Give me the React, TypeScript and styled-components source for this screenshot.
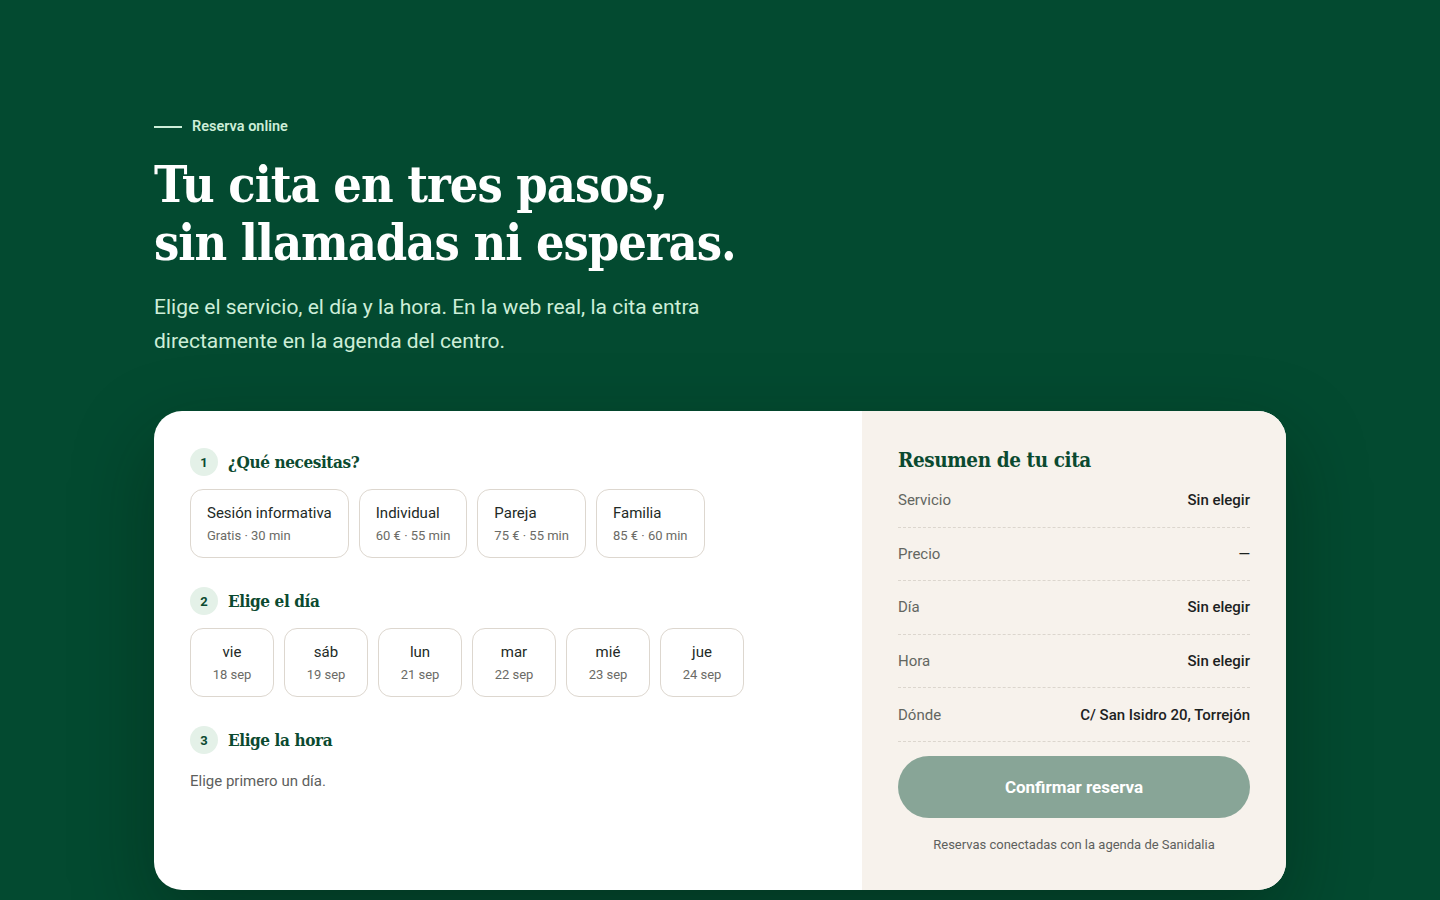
import React, { FC } from "react";
import styled, { createGlobalStyle } from "styled-components";

const GlobalStyle = createGlobalStyle`
  html, body {
    margin: 0;
    padding: 0;
    background: #034a30;
  }
  body {
    font-family: Roboto, "Liberation Sans", Arial, sans-serif;
  }
  * {
    box-sizing: border-box;
  }
`;

const services = [
  { name: "Sesión informativa", meta: "Gratis · 30 min" },
  { name: "Individual", meta: "60 € · 55 min" },
  { name: "Pareja", meta: "75 € · 55 min" },
  { name: "Familia", meta: "85 € · 60 min" },
];

const days = [
  { day: "vie", date: "18 sep" },
  { day: "sáb", date: "19 sep" },
  { day: "lun", date: "21 sep" },
  { day: "mar", date: "22 sep" },
  { day: "mié", date: "23 sep" },
  { day: "jue", date: "24 sep" },
];

const summary = [
  { label: "Servicio", value: "Sin elegir" },
  { label: "Precio", value: "—" },
  { label: "Día", value: "Sin elegir" },
  { label: "Hora", value: "Sin elegir" },
  { label: "Dónde", value: "C/ San Isidro 20, Torrejón" },
];

const App: FC = (): JSX.Element => {
  return (
    <Page>
      <GlobalStyle />
      <Hero>
        <Eyebrow>
          <EyebrowLine />
          Reserva online
        </Eyebrow>
        <Title>
          Tu cita en tres pasos,
          <br />
          sin llamadas ni esperas.
        </Title>
        <Lead>
          Elige el servicio, el día y la hora. En la web real, la cita entra
          directamente en la agenda del centro.
        </Lead>
      </Hero>

      <Card>
        <Steps>
          <Step>
            <StepHead>
              <StepNum>1</StepNum>
              <StepTitle>¿Qué necesitas?</StepTitle>
            </StepHead>
            <OptionRow>
              {services.map((s) => (
                <Option key={s.name} type="button">
                  <OptionMain>{s.name}</OptionMain>
                  <OptionSub>{s.meta}</OptionSub>
                </Option>
              ))}
            </OptionRow>
          </Step>

          <Step>
            <StepHead>
              <StepNum>2</StepNum>
              <StepTitle>Elige el día</StepTitle>
            </StepHead>
            <OptionRow>
              {days.map((d) => (
                <DayOption key={d.date} type="button">
                  <OptionMain>{d.day}</OptionMain>
                  <OptionSub>{d.date}</OptionSub>
                </DayOption>
              ))}
            </OptionRow>
          </Step>

          <Step>
            <StepHead>
              <StepNum>3</StepNum>
              <StepTitle>Elige la hora</StepTitle>
            </StepHead>
            <Hint>Elige primero un día.</Hint>
          </Step>
        </Steps>

        <Summary>
          <SummaryTitle>Resumen de tu cita</SummaryTitle>
          <SummaryList>
            {summary.map((r) => (
              <SummaryRow key={r.label}>
                <SummaryLabel>{r.label}</SummaryLabel>
                <SummaryValue>{r.value}</SummaryValue>
              </SummaryRow>
            ))}
          </SummaryList>
          <Confirm type="button" disabled>
            Confirmar reserva
          </Confirm>
          <Note>Reservas conectadas con la agenda de Sanidalia</Note>
        </Summary>
      </Card>
    </Page>
  );
};

export default App;

const Page = styled.main`
  min-height: 900px;
  padding: 117px 154px 10px;
  background: #034a30;
`;

const Hero = styled.section`
  max-width: 640px;
`;

const Eyebrow = styled.div`
  display: flex;
  align-items: center;
  gap: 10px;
  font-size: 14.5px;
  font-weight: 600;
  color: #cdeed8;
  line-height: 20px;
`;

const EyebrowLine = styled.span`
  display: block;
  width: 28px;
  height: 1.5px;
  background: #cdeed8;
`;

const Title = styled.h1`
  margin: 19px 0 0;
  font-family: "DejaVu Serif", "Liberation Serif", serif;
  font-stretch: condensed;
  font-weight: 700;
  font-size: 50px;
  line-height: 58px;
  letter-spacing: -1px;
  color: #ffffff;
  white-space: nowrap;
`;

const Lead = styled.p`
  margin: 18px 0 0;
  max-width: 600px;
  font-size: 21px;
  line-height: 34px;
  color: #cdeed8;
`;

const Card = styled.section`
  display: grid;
  grid-template-columns: 708px 1fr;
  margin-top: 53px;
  width: 1132px;
  min-height: 479px;
  border-radius: 28px;
  overflow: hidden;
  background: #ffffff;
  box-shadow: 0 30px 80px rgba(0, 20, 10, 0.35);
`;

const Steps = styled.div`
  display: flex;
  flex-direction: column;
  gap: 29px;
  padding: 37px 36px 40px;
`;

const Step = styled.div`
  display: flex;
  flex-direction: column;
  gap: 14px;
`;

const StepHead = styled.div`
  display: flex;
  align-items: center;
  gap: 10px;
`;

const StepNum = styled.span`
  display: flex;
  align-items: center;
  justify-content: center;
  width: 28px;
  height: 28px;
  border-radius: 50%;
  background: #e4f1e8;
  color: #0b4a30;
  font-size: 13px;
  font-weight: 700;
`;

const StepTitle = styled.h3`
  margin: 0;
  font-family: "DejaVu Serif", "Liberation Serif", serif;
  font-stretch: condensed;
  font-weight: 700;
  font-size: 17px;
  letter-spacing: -0.4px;
  color: #0b4a30;
`;

const OptionRow = styled.div`
  display: flex;
  gap: 10px;
`;

const Option = styled.button`
  display: flex;
  flex-direction: column;
  align-items: flex-start;
  gap: 5px;
  height: 69px;
  margin-top: -1px;
  padding: 13px 16px 0 16px;
  border: 1px solid #ddd7cf;
  border-radius: 13px;
  background: #ffffff;
  font-family: inherit;
  cursor: pointer;
  text-align: left;
`;

const DayOption = styled(Option)`
  width: 84px;
  align-items: center;
  padding: 13px 0 0;
  text-align: center;
`;

const OptionMain = styled.span`
  font-size: 15px;
  line-height: 20px;
  color: #222a26;
`;

const OptionSub = styled.span`
  font-size: 13px;
  line-height: 16px;
  color: #6b6b66;
`;

const Hint = styled.p`
  margin: 4px 0 0;
  font-size: 15px;
  color: #5d605d;
`;

const Summary = styled.aside`
  display: flex;
  flex-direction: column;
  padding: 36px 36px 36px;
  background: #f7f2ec;
`;

const SummaryTitle = styled.h2`
  margin: 0 0 1px;
  font-family: "DejaVu Serif", "Liberation Serif", serif;
  font-stretch: condensed;
  font-weight: 700;
  font-size: 20.5px;
  line-height: 26px;
  letter-spacing: -0.4px;
  color: #0b4a30;
`;

const SummaryList = styled.div`
  display: flex;
  flex-direction: column;
`;

const SummaryRow = styled.div`
  display: flex;
  align-items: center;
  justify-content: space-between;
  height: 53.6px;
  border-bottom: 1px dashed #dcd6ce;
`;

const SummaryLabel = styled.span`
  font-size: 15px;
  color: #636661;
`;

const SummaryValue = styled.span`
  font-size: 15px;
  font-weight: 500;
  color: #1d221f;
`;

const Confirm = styled.button`
  margin-top: 14px;
  height: 62px;
  border: none;
  border-radius: 31px;
  background: #88a597;
  color: #ffffff;
  font-family: inherit;
  font-size: 17px;
  font-weight: 700;
  cursor: not-allowed;
`;

const Note = styled.p`
  margin: 19px 0 0;
  text-align: center;
  font-size: 13px;
  color: #5d605d;
`;
